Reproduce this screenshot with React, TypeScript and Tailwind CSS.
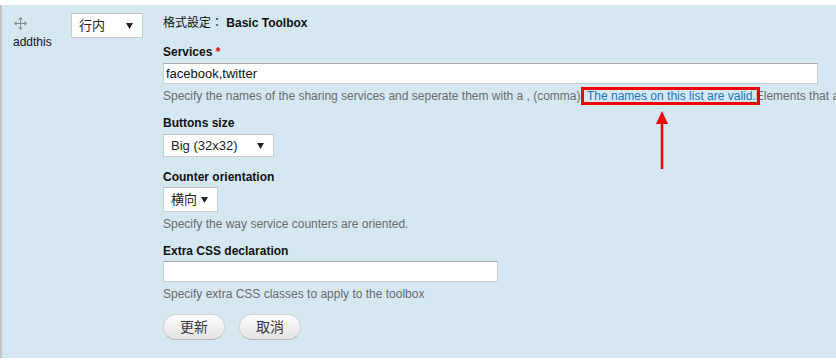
import React from "react";

const font = { fontFamily: '"Liberation Sans", Arial, "Noto Sans CJK TC", sans-serif' };

function DragIcon() {
  return (
    <svg width="13" height="13" viewBox="0 0 13 13" className="block">
      <g fill="#8a8a8a">
        <rect x="6" y="2" width="1" height="9" />
        <rect x="2" y="6" width="9" height="1" />
        <polygon points="6.5,0 4,2.5 9,2.5" />
        <polygon points="6.5,13 4,10.5 9,10.5" />
        <polygon points="0,6.5 2.5,4 2.5,9" />
        <polygon points="13,6.5 10.5,4 10.5,9" />
      </g>
    </svg>
  );
}

function Caret() {
  return (
    <svg width="7" height="6" viewBox="0 0 7 6" className="block">
      <polygon points="0,0 7,0 3.5,6" fill="#222" />
    </svg>
  );
}

function Select({ label, w, h }: { label: string; w: string; h: string }) {
  return (
    <div
      className={`${w} ${h} flex items-center justify-between bg-white border border-[#cccccc] border-t-[#bdbdbd] pl-[7px] pr-[9px] text-[13px] text-[#222]`}
    >
      <span>{label}</span>
      <Caret />
    </div>
  );
}

export default function App() {
  return (
    <div className="w-[836px] h-[362px] overflow-hidden bg-white" style={font}>
      <div className="mt-[5px] h-[353px] bg-[#d5e8f2] border-l-2 border-[#c4c4c4] flex w-[1000px]">
        <div className="w-[69px] pl-[11px] pt-[12px] shrink-0">
          <div className="pl-[1px]">
            <DragIcon />
          </div>
          <div className="text-[12px] leading-[14px] mt-[5px] text-[#111]">addthis</div>
        </div>
        <div className="w-[92px] shrink-0 pt-[8px]">
          <Select label="行内" w="w-[72px]" h="h-[25px]" />
        </div>
        <div className="flex-1 pt-[10px] text-[12px] leading-[16px] text-[#111]">
          <div>
            格式設定： <span className="font-bold">Basic Toolbox</span>
          </div>
          <div className="mt-[13px] font-bold">
            Services <span className="text-[#e00000]">*</span>
          </div>
          <div className="mt-[3px] w-[655px] h-[21px] bg-white border border-[#cccccc] border-t-[#a8a8a8] text-[13px] leading-[19px] pl-[2px]">
            facebook,twitter
          </div>
          <div className="mt-[4px] whitespace-nowrap text-[#6b6b6b]">
            Specify the names of the sharing services and seperate them with a , (comma).{" "}
            <span className="relative text-[#1a74c2]">
              The names on this list are valid.
              <span className="absolute -left-[6px] -right-[4px] -top-[2px] -bottom-[2px] border-[3px] border-[#ee0000]" />
              <span className="absolute left-[69px] top-[22px] w-[12px] h-[58px]">
                <svg width="12" height="58" viewBox="0 0 12 58" className="block">
                  <polygon points="6,0 0,13 12,13" fill="#ee0000" />
                  <rect x="4.75" y="10" width="2.5" height="48" fill="#ee0000" />
                </svg>
              </span>
            </span>
            Elements that are not in the list will be ignored.
          </div>
          <div className="mt-[11px] font-bold">Buttons size</div>
          <div className="mt-[3px]">
            <Select label="Big (32x32)" w="w-[111px]" h="h-[23px]" />
          </div>
          <div className="mt-[12px] font-bold">Counter orientation</div>
          <div className="mt-[2px]">
            <Select label="横向" w="w-[55px]" h="h-[25px]" />
          </div>
          <div className="mt-[4px] text-[#6b6b6b]">Specify the way service counters are oriented.</div>
          <div className="mt-[11px] font-bold">Extra CSS declaration</div>
          <div className="mt-[2px] w-[335px] h-[21px] bg-white border border-[#cccccc] border-t-[#a8a8a8]" />
          <div className="mt-[4px] text-[#6b6b6b]">Specify extra CSS classes to apply to the toolbox</div>
          <div className="mt-[12px] flex gap-[14px]">
            <button className="w-[62px] h-[26px] rounded-full border border-[#d4d4d4] border-b-[#b8b8b8] bg-gradient-to-b from-[#fdfdfd] to-[#e3e3e3] text-[14px] text-[#3a3a3a]">
              更新
            </button>
            <button className="w-[62px] h-[26px] rounded-full border border-[#d4d4d4] border-b-[#b8b8b8] bg-gradient-to-b from-[#fdfdfd] to-[#e3e3e3] text-[14px] text-[#3a3a3a]">
              取消
            </button>
          </div>
        </div>
      </div>
    </div>
  );
}
